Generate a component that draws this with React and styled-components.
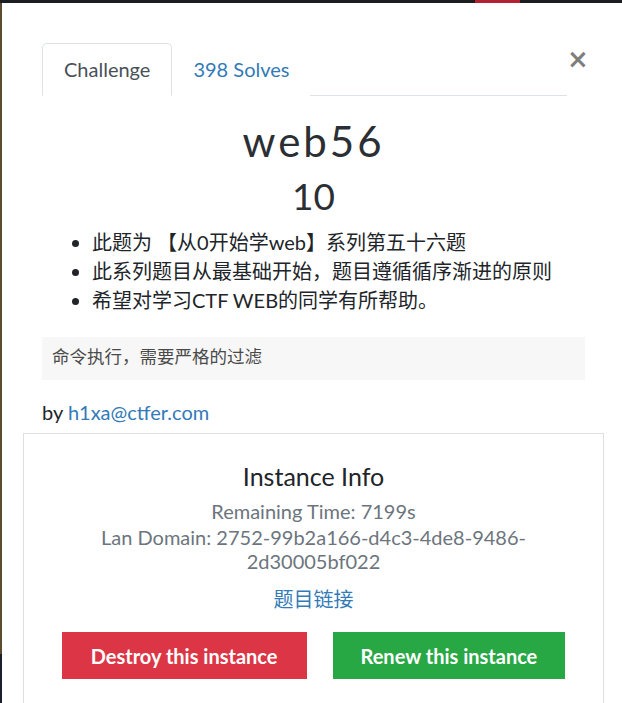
import React from "react";
import styled, { createGlobalStyle } from "styled-components";

const blue = "#337ab7";
const text = "#212529";
const muted = "#6c757d";
const sans = `Lato, "Noto Sans CJK SC", sans-serif`;

const GlobalStyle = createGlobalStyle`
  html, body {
    margin: 0;
    padding: 0;
    background: #1d2026;
  }
  body {
    font-family: ${sans};
    color: ${text};
  }
`;

const Page = styled.div`
  width: 622px;
  height: 703px;
  display: flex;
  flex-direction: column;
  overflow: hidden;
  background: #1d2026;
`;

// what is left of the site navbar behind the modal
const TopBar = styled.div`
  height: 3px;
  background:
    linear-gradient(
      to right,
      #1b1d21 0,
      #1b1d21 475px,
      #b3202f 475px,
      #b3202f 520px,
      #1b1d21 520px
    );
`;

const Main = styled.div`
  flex: 1;
  display: flex;
  min-height: 0;
`;

const LeftEdge = styled.div`
  width: 2px;
  background: linear-gradient(
    to bottom,
    #5d4b2f 0,
    #5d4b2f 93%,
    #1c1f2b 93%
  );
`;

const Modal = styled.div`
  flex: 1;
  background: #fff;
  padding: 40px 37px 0 40px;
`;

const HeaderRow = styled.div`
  display: flex;
  align-items: flex-start;
`;

const Tabs = styled.ul`
  flex: 1;
  display: flex;
  list-style: none;
  margin: 0;
  padding: 0;
  border-bottom: 1px solid #dee2e6;
`;

const Tab = styled.li`
  margin-bottom: -1px;
  padding: 10px ${(p) => (p.$active ? 21 : 20)}px 11px;
  font-size: 20px;
  line-height: 30px;
  border: 1px solid ${(p) => (p.$active ? "#dee2e6" : "transparent")};
  border-bottom-color: ${(p) => (p.$active ? "#fff" : "transparent")};
  border-radius: 5px 5px 0 0;
  color: ${(p) => (p.$active ? "#495057" : blue)};
  background: #fff;
`;

const Close = styled.button`
  width: 18px;
  margin-top: 3px;
  padding: 0 3px 0 0;
  border: 0;
  background: transparent;
  font-family: "DejaVu Sans", sans-serif;
  font-size: 26px;
  line-height: 26px;
  font-weight: 700;
  color: #000;
  opacity: 0.5;
  cursor: pointer;
`;

const Title = styled.h2`
  margin: 20px 0 0;
  text-align: center;
  font-weight: 400;
  font-size: 42px;
  line-height: 50px;
  letter-spacing: 3px;
  color: #2b2f33;
`;

const Points = styled.h3`
  margin: 8px 0 0;
  text-align: center;
  font-weight: 400;
  font-size: 37px;
  line-height: 44px;
  color: #2b2f33;
`;

const Bullets = styled.ul`
  margin: 10px 0 0;
  padding-left: 50px;
  font-size: 20px;
  line-height: 29px;
  color: ${text};
`;

const Pre = styled.pre`
  margin: 22px 0 0;
  padding: 9px 10px;
  background: #f7f7f7;
  font-family: "Liberation Mono", "Noto Sans CJK SC", monospace;
  font-size: 17.5px;
  line-height: 25px;
  color: #4a4a4a;
`;

const Author = styled.p`
  margin: 19px 0 0;
  font-size: 20px;
  line-height: 26px;
`;

const Link = styled.a`
  color: ${blue};
  text-decoration: none;
`;

const Card = styled.div`
  margin: 8px -19px 0 -19px;
  border: 1px solid #dfdfdf;
  border-bottom: 0;
  padding: 24px 25px 40px;
  text-align: center;
`;

const CardTitle = styled.h5`
  margin: 0 0 5px;
  font-weight: 400;
  font-size: 25px;
  line-height: 36px;
  color: ${text};
`;

const Info = styled.p`
  margin: 0 0 2px;
  font-size: 20px;
  line-height: 24px;
  color: ${muted};
`;

const InstanceLink = styled(Link)`
  display: inline-block;
  margin-top: 9px;
  font-size: 20px;
  line-height: 30px;
`;

const Buttons = styled.div`
  display: flex;
  justify-content: center;
  gap: 26px;
  margin-top: 18px;
`;

const Button = styled.button`
  height: 47px;
  padding: 0 ${(p) => p.$pad}px;
  border: 0;
  font-family: ${sans};
  font-weight: 700;
  font-size: 20px;
  color: #fff;
  background: ${(p) => p.$color};
  cursor: pointer;
`;

export default function App() {
  return (
    <>
      <GlobalStyle />
      <Page>
        <TopBar />
        <Main>
          <LeftEdge />
          <Modal>
            <HeaderRow>
              <Tabs>
                <Tab $active>Challenge</Tab>
                <Tab>398 Solves</Tab>
              </Tabs>
              <Close aria-label="Close">×</Close>
            </HeaderRow>
            <Title>web56</Title>
            <Points>10</Points>
            <Bullets>
              <li>此题为 【从0开始学web】系列第五十六题</li>
              <li>此系列题目从最基础开始，题目遵循循序渐进的原则</li>
              <li>希望对学习CTF WEB的同学有所帮助。</li>
            </Bullets>
            <Pre>命令执行，需要严格的过滤</Pre>
            <Author>
              by <Link href="#">h1xa@ctfer.com</Link>
            </Author>
            <Card>
              <CardTitle>Instance Info</CardTitle>
              <Info>Remaining Time: 7199s</Info>
              <Info>Lan Domain: 2752-99b2a166-d4c3-4de8-9486-2d30005bf022</Info>
              <InstanceLink href="#">题目链接</InstanceLink>
              <Buttons>
                <Button $color="#dc3545" $pad={29}>Destroy this instance</Button>
                <Button $color="#28a745" $pad={28}>Renew this instance</Button>
              </Buttons>
            </Card>
          </Modal>
        </Main>
      </Page>
    </>
  );
}
